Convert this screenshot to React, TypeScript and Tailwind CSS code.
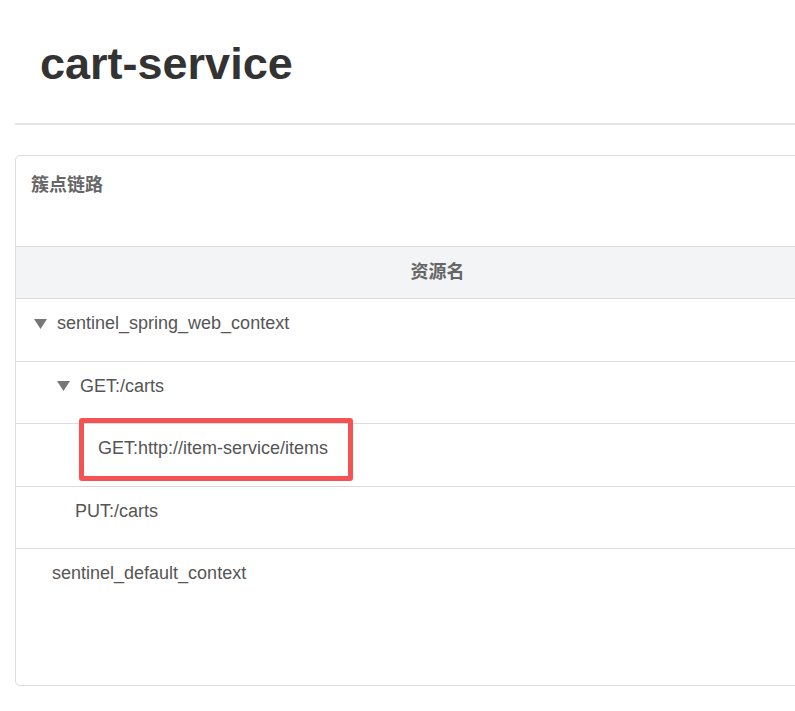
import React from "react";

type Node = { name: string; indent: number; caret?: boolean; mark?: boolean };

const rows: Node[] = [
  { name: "sentinel_spring_web_context", indent: 18, caret: true },
  { name: "GET:/carts", indent: 41, caret: true },
  { name: "GET:http://item-service/items", indent: 82, mark: true },
  { name: "PUT:/carts", indent: 59 },
  { name: "sentinel_default_context", indent: 36 },
];

const Caret = () => (
  <svg width="13" height="10" viewBox="0 0 13 10" className="mr-[10px] shrink-0">
    <path d="M0 0 H13 L6.5 10 Z" fill="#777" />
  </svg>
);

export default function App() {
  return (
    <div
      className="w-[795px] h-[711px] overflow-hidden bg-white text-[#555]"
      style={{ fontFamily: '"Liberation Sans", Arial, "Noto Sans CJK SC", sans-serif' }}
    >
      <div className="pl-[40px] pt-[38px] h-[123px]">
        <h1 className="text-[45px] leading-[52px] font-bold text-[#333]">cart-service</h1>
      </div>
      <div className="ml-[15px] border-t-2 border-[#e4e4e4]" />

      <div className="ml-[15px] mt-[30px] w-[845px] h-[531px] border border-[#dcdcdc] rounded-[5px] flex flex-col">
        <div className="h-[90px] pl-[15px] pt-[16px] text-[18px] font-bold text-[#666]">簇点链路</div>
        <div className="h-[53px] border-y border-[#dcdcdc] bg-[#f3f4f6] flex items-center justify-center text-[18px] font-bold text-[#666]">
          资源名
        </div>
        {rows.map((r, i) => (
          <div
            key={i}
            className={`relative h-[62.5px] pt-[12px] ${i < rows.length - 1 ? "border-b border-[#dcdcdc]" : ""}`}
          >
            <div className="flex items-center h-[25px] text-[18px] text-[#555]" style={{ paddingLeft: r.indent }}>
              {r.caret && <Caret />}
              <span>{r.name}</span>
            </div>
            {r.mark && (
              <div className="absolute left-[63px] top-[-6px] w-[274px] h-[63px] border-[5px] border-[#f55353] rounded-[3px]" />
            )}
          </div>
        ))}
      </div>
    </div>
  );
}
